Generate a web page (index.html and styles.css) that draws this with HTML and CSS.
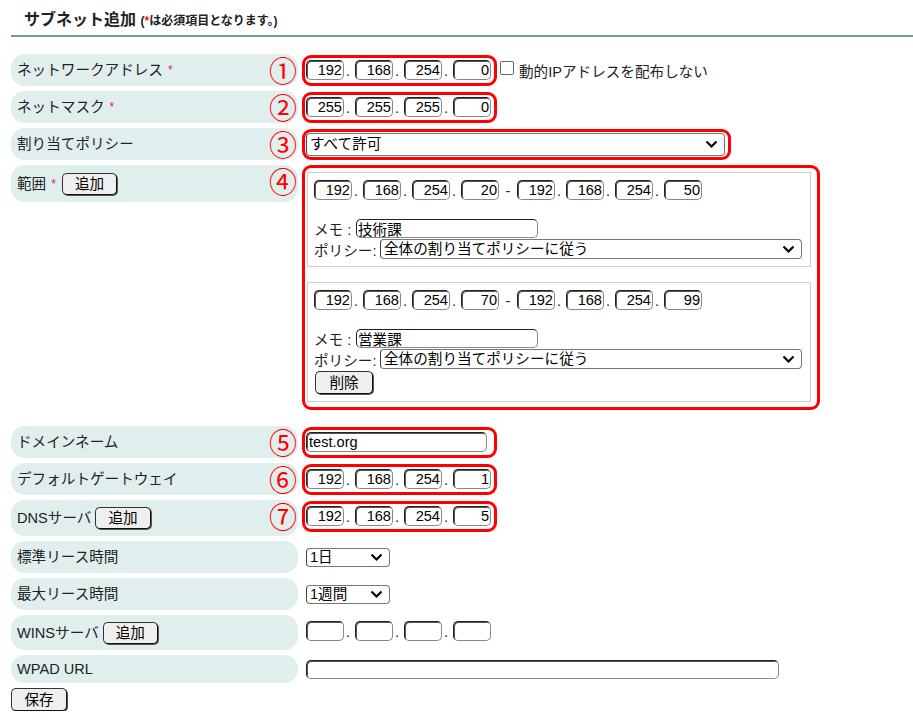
FILE: index.html
```html
<!DOCTYPE html>
<html lang="ja">
<head>
    <meta charset="UTF-8">
    <title>サブネット追加</title>
    <link rel="stylesheet" href="styles.css">
</head>
<body>
<div class="page">
    <h2 class="title">サブネット追加 <small>(<span class="req">*</span>は必須項目となります。)</small></h2>

    <div class="form">
        <!-- network address -->
        <div class="row">
            <div class="label">ネットワークアドレス<span class="req">*</span><span class="num">①</span></div>
            <div class="field">
                <div class="mark fixed">
                    <span class="ip"><input class="oct" value="192"><span class="dot">.</span><input class="oct" value="168"><span class="dot">.</span><input class="oct" value="254"><span class="dot">.</span><input class="oct" value="0"></span>
                </div>
                <label class="check"><span class="box"></span>動的IPアドレスを配布しない</label>
            </div>
        </div>

        <div class="row">
            <div class="label">ネットマスク<span class="req">*</span><span class="num">②</span></div>
            <div class="field">
                <div class="mark fixed">
                    <span class="ip"><input class="oct" value="255"><span class="dot">.</span><input class="oct" value="255"><span class="dot">.</span><input class="oct" value="255"><span class="dot">.</span><input class="oct" value="0"></span>
                </div>
            </div>
        </div>

        <div class="row">
            <div class="label">割り当てポリシー<span class="num">③</span></div>
            <div class="field">
                <div class="mark policy">
                    <div class="sel sel-main">すべて許可<svg width="13" height="9" viewBox="0 0 13 9"><path d="M1.5 1.5 L6.5 6.5 L11.5 1.5" fill="none" stroke="#000" stroke-width="2.2"/></svg></div>
                </div>
            </div>
        </div>

        <!-- ranges -->
        <div class="row row-range">
            <div class="label btn-row">範囲<span class="req">*</span><button class="btn btn-range">追加</button><span class="num">④</span></div>
            <div class="field top">
                <div class="mark range">
                    <div class="range-box">
                        <div class="ip-line">
                            <span class="ip"><input class="oct" value="192"><span class="dot">.</span><input class="oct" value="168"><span class="dot">.</span><input class="oct" value="254"><span class="dot">.</span><input class="oct" value="20"></span>
                            <span class="dash">-</span>
                            <span class="ip"><input class="oct" value="192"><span class="dot">.</span><input class="oct" value="168"><span class="dot">.</span><input class="oct" value="254"><span class="dot">.</span><input class="oct" value="50"></span>
                        </div>
                        <div class="memo-line"><span class="memo-label">メモ :</span><input class="memo" value="技術課"></div>
                        <div class="policy-line"><span class="policy-label">ポリシー:</span><div class="sel sel-range">全体の割り当てポリシーに従う<svg width="13" height="9" viewBox="0 0 13 9"><path d="M1.5 1.5 L6.5 6.5 L11.5 1.5" fill="none" stroke="#000" stroke-width="2.2"/></svg></div></div>
                    </div>
                    <div class="range-box">
                        <div class="ip-line">
                            <span class="ip"><input class="oct" value="192"><span class="dot">.</span><input class="oct" value="168"><span class="dot">.</span><input class="oct" value="254"><span class="dot">.</span><input class="oct" value="70"></span>
                            <span class="dash">-</span>
                            <span class="ip"><input class="oct" value="192"><span class="dot">.</span><input class="oct" value="168"><span class="dot">.</span><input class="oct" value="254"><span class="dot">.</span><input class="oct" value="99"></span>
                        </div>
                        <div class="memo-line"><span class="memo-label">メモ :</span><input class="memo" value="営業課"></div>
                        <div class="policy-line"><span class="policy-label">ポリシー:</span><div class="sel sel-range">全体の割り当てポリシーに従う<svg width="13" height="9" viewBox="0 0 13 9"><path d="M1.5 1.5 L6.5 6.5 L11.5 1.5" fill="none" stroke="#000" stroke-width="2.2"/></svg></div></div>
                        <button class="btn btn-del">削除</button>
                    </div>
                </div>
            </div>
        </div>

        <div class="row">
            <div class="label">ドメインネーム<span class="num">⑤</span></div>
            <div class="field">
                <div class="mark fixed"><input class="text domain" value="test.org"></div>
            </div>
        </div>

        <div class="row">
            <div class="label">デフォルトゲートウェイ<span class="num">⑥</span></div>
            <div class="field">
                <div class="mark fixed">
                    <span class="ip"><input class="oct" value="192"><span class="dot">.</span><input class="oct" value="168"><span class="dot">.</span><input class="oct" value="254"><span class="dot">.</span><input class="oct" value="1"></span>
                </div>
            </div>
        </div>

        <div class="row">
            <div class="label btn-row mid">DNSサーバ<button class="btn">追加</button><span class="num">⑦</span></div>
            <div class="field">
                <div class="mark fixed">
                    <span class="ip"><input class="oct" value="192"><span class="dot">.</span><input class="oct" value="168"><span class="dot">.</span><input class="oct" value="254"><span class="dot">.</span><input class="oct" value="5"></span>
                </div>
            </div>
        </div>

        <div class="row">
            <div class="label">標準リース時間</div>
            <div class="field plain">
                <div class="sel sel-small">1日<svg width="13" height="9" viewBox="0 0 13 9"><path d="M1.5 1.5 L6.5 6.5 L11.5 1.5" fill="none" stroke="#000" stroke-width="2.2"/></svg></div>
            </div>
        </div>

        <div class="row">
            <div class="label">最大リース時間</div>
            <div class="field plain">
                <div class="sel sel-small">1週間<svg width="13" height="9" viewBox="0 0 13 9"><path d="M1.5 1.5 L6.5 6.5 L11.5 1.5" fill="none" stroke="#000" stroke-width="2.2"/></svg></div>
            </div>
        </div>

        <div class="row">
            <div class="label btn-row short">WINSサーバ<button class="btn">追加</button></div>
            <div class="field plain">
                <span class="ip"><input class="oct"><span class="dot">.</span><input class="oct"><span class="dot">.</span><input class="oct"><span class="dot">.</span><input class="oct"></span>
            </div>
        </div>

        <div class="row">
            <div class="label thin">WPAD URL</div>
            <div class="field plain thin">
                <input class="text wpad">
            </div>
        </div>

        <button class="btn btn-save">保存</button>
    </div>
</div>
</body>
</html>
```

FILE: styles.css
```css
/* base */
body {
    margin: 0;
    font-family: "Liberation Sans", "Noto Sans CJK JP", sans-serif;
    font-size: 14.6px;
    color: #222;
}

.page {
    padding-left: 11px;
}

.title {
    margin: 0;
    height: 20px;
    padding: 10px 0 5px 13px;
    border-bottom: 2px solid #7398a4;
    font-size: 16px;
    line-height: 20px;
    overflow: hidden;
}

.title small {
    font-size: 12px;
}

.req {
    color: #e3261c;
    font-size: 12px;
    margin-left: 5px;
}

.title .req {
    margin-left: 0;
}

/* rows */
.form {
    margin-top: 17px;
}

.row {
    display: flex;
    align-items: flex-start;
    margin-bottom: 5px;
}

.row-range {
    margin-bottom: 16px;
}

.label {
    position: relative;
    box-sizing: border-box;
    width: 287px;
    height: 32px;
    padding-left: 6px;
    display: flex;
    align-items: center;
    background: #e1eeee;
    border-radius: 14px;
    line-height: 20px;
}

.label.btn-row {
    height: 37px;
}

.label.mid {
    height: 36px;
}

.label.short {
    height: 35px;
}

.label.thin {
    height: 28px;
}

.num {
    position: absolute;
    right: 1px;
    top: 2px;
    font-family: "Noto Sans CJK JP", sans-serif;
    font-size: 28px;
    line-height: 28px;
    color: #f00;
}

.field {
    margin-left: 4px;
    display: flex;
    align-items: center;
    height: 32px;
}

.field.top {
    height: auto;
}

.field.plain {
    padding-left: 4px;
}

.field.thin {
    height: 28px;
}

/* red annotation boxes */
.mark {
    box-sizing: border-box;
    display: flex;
    align-items: center;
    border: 3px solid #f00;
    border-radius: 9px;
    padding: 2px 3px 3px 1px;
}

.mark.fixed {
    width: 195px;
}

.mark.policy {
    padding: 1px 3px 1px 1px;
}

.mark.range {
    display: block;
    width: 518px;
    padding: 4px 6px 5px 2px;
}

/* inputs */
input {
    font: inherit;
    color: #000;
}

.ip {
    display: inline-flex;
    align-items: flex-end;
}

.oct, .text {
    box-sizing: border-box;
    height: 20px;
    margin: 0;
    border: 1px solid #777;
    border-color: #222 #888 #888 #222;
    border-radius: 5px;
    box-shadow: inset 1px 1px 0 #555;
    background: #fff;
}

.oct {
    width: 38px;
    padding: 0 1px 0 0;
    text-align: right;
}

.dot {
    display: inline-block;
    width: 11px;
    padding-left: 2px;
    box-sizing: border-box;
    line-height: 18px;
}

.text {
    padding: 0 2px;
}

.domain {
    width: 181px;
}

.wpad {
    width: 473px;
    height: 19px;
}

.check {
    display: flex;
    align-items: center;
    margin-left: 3px;
}

.check .box {
    width: 12px;
    height: 12px;
    border: 1px solid #666;
    border-radius: 2px;
    margin-right: 5px;
    margin-top: -4px;
}

/* select look */
.sel {
    box-sizing: border-box;
    display: flex;
    align-items: center;
    justify-content: space-between;
    border: 1px solid #767676;
    border-left-color: #444;
    border-radius: 4px;
    padding: 0 6px 0 3px;
    background: #fff;
    color: #000;
    line-height: 18px;
}

.sel-main {
    width: 419px;
    height: 23px;
}

.sel-range {
    width: 422px;
    height: 20px;
}

.sel-small {
    width: 84px;
    height: 19px;
}

/* range boxes */
.range-box {
    border: 1px solid #d0d0d0;
    padding: 7px 6px 7px 6px;
}

.range-box + .range-box {
    margin-top: 15px;
}

.ip-line {
    display: flex;
    align-items: flex-end;
    height: 20px;
    margin-bottom: 18px;
}

.dash {
    width: 18px;
    text-align: center;
    line-height: 18px;
}

.memo-line, .policy-line {
    display: flex;
    align-items: center;
    height: 20px;
}

.policy-line {
    margin-top: 1px;
}

.memo-label {
    width: 42px;
}

.policy-label {
    width: 66px;
}

.memo {
    box-sizing: border-box;
    width: 182px;
    height: 19px;
    padding: 0 1px;
    border: 1px solid #222;
    border-color: #222 #888 #888 #222;
    border-radius: 5px;
}

/* buttons */
.btn {
    font: inherit;
    color: #000;
    box-sizing: border-box;
    height: 22px;
    padding: 0 12px;
    margin-left: 4px;
    border: 1px solid #333;
    border-right-color: #111;
    border-bottom-color: #111;
    border-radius: 5px;
    background: #efefef;
    box-shadow: 1px 1px 0 #555;
    line-height: 18px;
    white-space: nowrap;
}

.btn-range {
    margin-left: 6px;
}

.btn-del {
    display: block;
    margin: 2px 0 0 1px;
    width: 58px;
    height: 23px;
    padding: 0;
}

.btn-save {
    display: block;
    margin: 2px 0 0 0;
    width: 56px;
    height: 23px;
    padding: 0;
}
```
